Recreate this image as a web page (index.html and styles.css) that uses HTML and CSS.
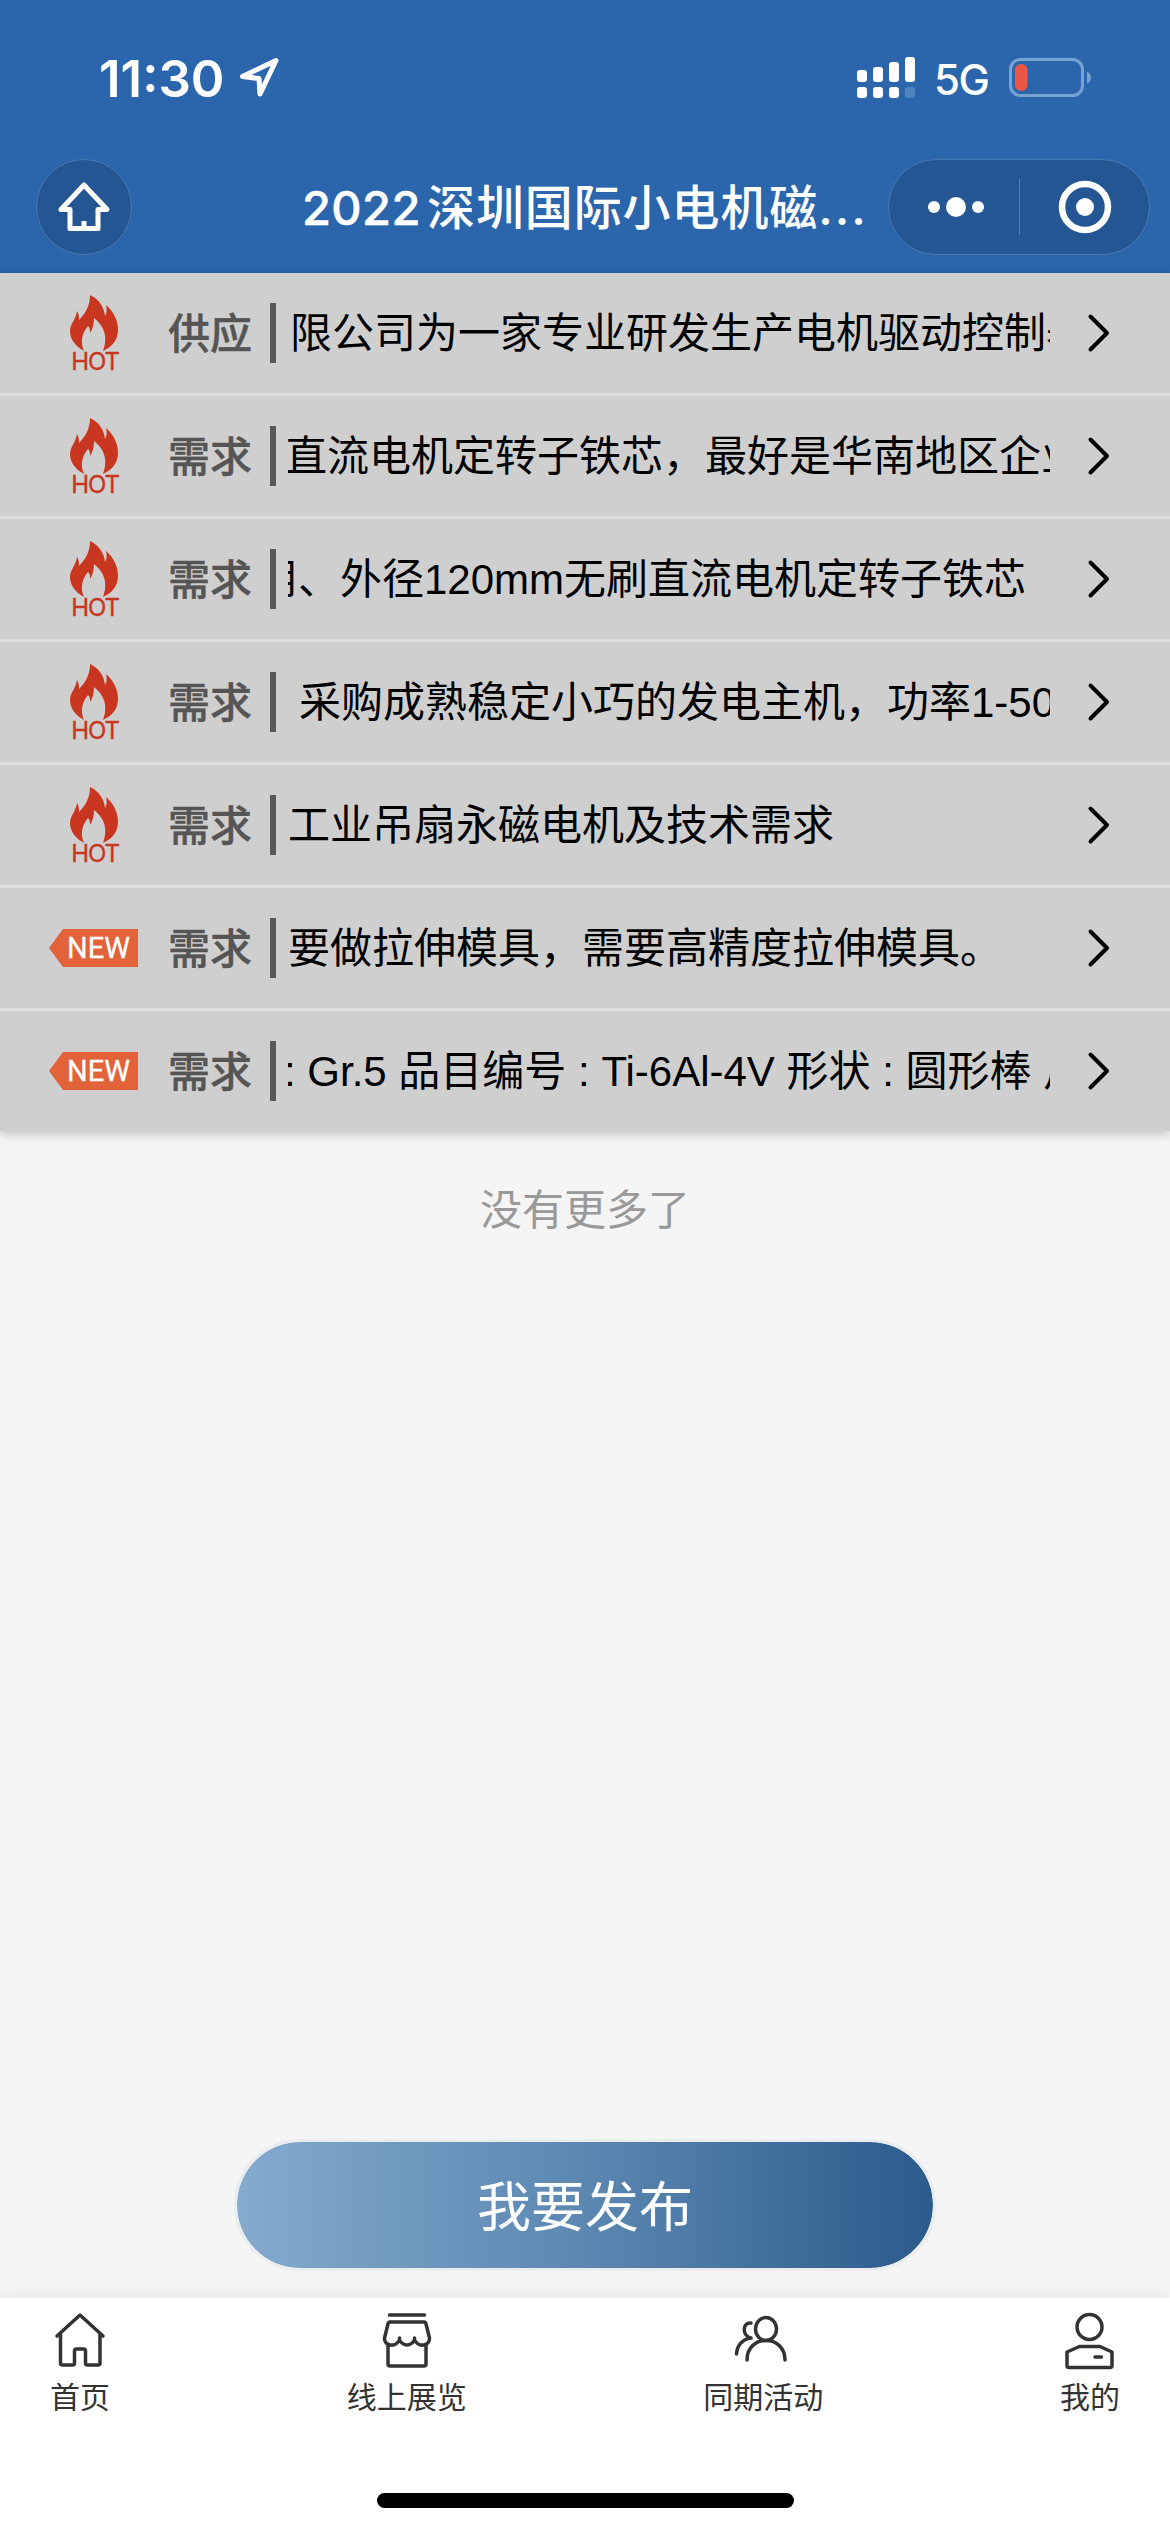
FILE: index.html
```html
<!DOCTYPE html>
<html lang="zh-CN">
<head>
<meta charset="utf-8">
<title>2022深圳国际小电机磁...</title>
<link rel="stylesheet" href="styles.css">
</head>
<body>
<svg class="defs" width="0" height="0">
  <symbol id="flame" viewBox="0 0 48 56">
    <path d="M20 0C29 4 34 12 35 21C37 18 37 14 36 10C44 17 48 26 48 35C48 45 42 52 33 56C37 46 37 33 24 23C24 28 23 34 20 38C20 35 20 33 18 31C12 38 10 47 14 56C5 51 0 44 0 36C0 29 6 24 7 16C9 19 9 22 9 25C16 18 20 10 20 0Z"/>
  </symbol>
  <symbol id="chevron" viewBox="0 0 24 40">
    <path d="M3.500 3.500L20 20L3.500 36.500"/>
  </symbol>
</svg>
<div class="screen">
  <header class="header">
    <div class="status">
      <span class="time">11:30</span>
      <svg class="locate" width="42" height="42" viewBox="0 0 42 42"><path d="M38 3.500L4.500 19.500L21 21.500L22 37Z"/></svg>
      <svg class="signal" width="58" height="42" viewBox="0 0 58 42">
        <rect x="0" y="13" width="10" height="12" rx="3"/><rect x="16" y="10" width="10" height="15" rx="3"/><rect x="32" y="5" width="10" height="20" rx="3"/><rect x="48" y="0" width="10" height="25" rx="3"/>
        <rect x="0" y="30" width="10" height="11" rx="3"/><rect x="16" y="30" width="10" height="11" rx="3"/><rect x="32" y="30" width="10" height="11" rx="3"/><rect class="weak" x="48" y="30" width="10" height="11" rx="3"/>
      </svg>
      <span class="network">5G</span>
      <svg class="battery" width="83" height="40" viewBox="0 0 83 40">
        <rect class="shell" x="1.500" y="1.500" width="72" height="36" rx="10"/>
        <path class="tip" d="M78 13.500Q82 15.500 82 19.500Q82 23.500 78 25.500Z"/>
        <rect class="charge" x="6" y="6" width="12.500" height="27" rx="6"/>
      </svg>
    </div>
    <div class="nav">
      <div class="round">
        <svg width="54" height="52" viewBox="0 0 54 52"><path d="M27 4L50 28.500H41V47.500H13V28.500H4Z"/><path class="door" d="M27 40V47"/></svg>
      </div>
      <h1 class="title"><span class="year">2022</span>深圳国际小电机磁<span class="dots">...</span></h1>
      <div class="capsule">
        <svg class="more" width="58" height="24" viewBox="0 0 58 24"><circle cx="7" cy="12" r="6"/><circle cx="29" cy="12" r="10"/><circle cx="51" cy="12" r="6"/></svg>
        <span class="divider"></span>
        <svg class="target" width="54" height="54" viewBox="0 0 54 54"><circle class="ring" cx="27" cy="27" r="23"/><circle class="core" cx="27" cy="27" r="9"/></svg>
      </div>
    </div>
  </header>

  <main class="content">
    <ul class="list">
      <li class="row"><div class="tag hot"><svg width="48" height="56"><use href="#flame"/></svg><span>HOT</span></div><b class="kind">供应</b><div class="ticker"><p style="margin-left:2px">限公司为一家专业研发生产电机驱动控制器</p></div><svg class="chevron" width="24" height="40"><use href="#chevron"/></svg></li>
      <li class="row"><div class="tag hot"><svg width="48" height="56"><use href="#flame"/></svg><span>HOT</span></div><b class="kind">需求</b><div class="ticker"><p style="margin-left:-3px">直流电机定转子铁芯，最好是华南地区企业</p></div><svg class="chevron" width="24" height="40"><use href="#chevron"/></svg></li>
      <li class="row"><div class="tag hot"><svg width="48" height="56"><use href="#flame"/></svg><span>HOT</span></div><b class="kind">需求</b><div class="ticker"><p style="margin-left:-32px">用、外径120mm无刷直流电机定转子铁芯</p></div><svg class="chevron" width="24" height="40"><use href="#chevron"/></svg></li>
      <li class="row"><div class="tag hot"><svg width="48" height="56"><use href="#flame"/></svg><span>HOT</span></div><b class="kind">需求</b><div class="ticker"><p style="margin-left:11px">采购成熟稳定小巧的发电主机，功率1-50</p></div><svg class="chevron" width="24" height="40"><use href="#chevron"/></svg></li>
      <li class="row"><div class="tag hot"><svg width="48" height="56"><use href="#flame"/></svg><span>HOT</span></div><b class="kind">需求</b><div class="ticker"><p>工业吊扇永磁电机及技术需求</p></div><svg class="chevron" width="24" height="40"><use href="#chevron"/></svg></li>
      <li class="row"><div class="tag new"><span>NEW</span></div><b class="kind">需求</b><div class="ticker"><p>要做拉伸模具，需要高精度拉伸模具。</p></div><svg class="chevron" width="24" height="40"><use href="#chevron"/></svg></li>
      <li class="row"><div class="tag new"><span>NEW</span></div><b class="kind">需求</b><div class="ticker"><p style="margin-left:-4px">: Gr.5 品目编号 : Ti-6Al-4V 形状 : 圆形棒 尺</p></div><svg class="chevron" width="24" height="40"><use href="#chevron"/></svg></li>
    </ul>
    <p class="end">没有更多了</p>
    <button class="publish">我要发布</button>
  </main>

  <footer class="footer">
    <nav class="tabs">
      <a class="tab"><svg width="60" height="60" viewBox="0 0 60 60"><path d="M7 26L30 5L53 26M10.500 23V53Q10.500 55 12.500 55H22.500Q24.500 55 24.500 53V41Q24.500 39 26.500 39H33.500Q35.500 39 35.500 41V53Q35.500 55 37.500 55H48Q50 55 50 53V23"/></svg><span>首页</span></a>
      <a class="tab"><svg width="60" height="60" viewBox="0 0 60 60"><path d="M12.500 5H47.500M13 12H47Q48.500 12 49 14L52.500 28C53 36 42 38 37.500 30V28V30C34 36.500 26 36.500 22.500 30V28V30C18 38 7 36 7.500 28L11 14Q11.500 12 13 12ZM11 35V54Q11 56 13 56H47Q49 56 49 54V35"/></svg><span>线上展览</span></a>
      <a class="tab"><svg width="60" height="60" viewBox="0 0 60 60"><ellipse cx="33" cy="19" rx="10.500" ry="11.500"/><path d="M14 50C14 24 52 24 52 50M18 13C9 12 9 26 18 28C9 29 4 36 3.500 44"/></svg><span>同期活动</span></a>
      <a class="tab"><svg width="60" height="60" viewBox="0 0 60 60"><ellipse cx="29.500" cy="17" rx="12.500" ry="12.500"/><path d="M19.500 36.500H40L52 42V55.500Q52 57.500 50 57.500H9Q7 57.500 7 55.500V42ZM35 47H41.500"/></svg><span>我的</span></a>
    </nav>
    <div class="indicator"></div>
  </footer>
</div>
</body>
</html>
```
FILE: styles.css
```css
* { box-sizing: border-box; }
body, ul, p, h1 { margin: 0; padding: 0; }
body {
  width: 1170px;
  background: #f5f5f5;
  font-family: "Liberation Sans", "Noto Sans CJK SC", sans-serif;
}
.defs { display: block; }
.screen { display: flex; flex-direction: column; height: 2532px; overflow: hidden; }

.header { height: 273px; background: #2b66ac; color: #fff; flex: none; }
.status { height: 159px; display: flex; align-items: center; padding: 0 78px 3px 99px; font-family: Inter, sans-serif; }
.time { font-size: 51px; font-weight: 600; width: 139px; letter-spacing: 0; white-space: nowrap; }
.locate { fill: none; stroke: #fff; stroke-width: 5; stroke-linejoin: round; }
.signal { margin-left: auto; fill: #fff; }
.signal .weak { fill: #4b84be; }
.network { font-size: 42px; font-weight: 500; width: 54px; margin: 2px 21px 0 19px; letter-spacing: -1.5px; white-space: nowrap; }
.shell { fill: none; stroke: #77a3d0; stroke-width: 3; }
.tip { fill: #77a3d0; }
.charge { fill: #ed5546; }

.nav { display: flex; align-items: center; height: 96px; padding: 0 20px 0 36px; }
.round { width: 96px; height: 96px; border-radius: 50%; background: #245694; border: 1px solid #4a7aae; display: flex; align-items: center; justify-content: center; flex: none; }
.round svg { fill: none; stroke: #fff; stroke-width: 5; stroke-linejoin: round; }
.title { width: 585px; margin-left: 170px; font-size: 48px; font-weight: 500; letter-spacing: .9px; white-space: nowrap; line-height: 90px; height: 96px; font-family: "Noto Sans CJK SC", sans-serif; }
.year { display: inline-block; width: 125px; font-family: Inter, sans-serif; font-weight: 500; font-size: 47px; letter-spacing: .4px; -webkit-text-stroke: .5px #fff; }
.dots { font-family: Inter, sans-serif; letter-spacing: 2px; }
.capsule { width: 262px; height: 96px; margin-left: auto; border: 1px solid #4a7aae; border-radius: 48px; background: #245694; display: flex; align-items: center; flex: none; padding: 0 37px 0 38px; }
.more { fill: #fff; }
.divider { width: 1px; height: 56px; background: #4f7fb3; margin-left: 34px; }
.target { margin-left: auto; }
.ring { fill: none; stroke: #fff; stroke-width: 6.500; }
.core { fill: #fff; }

.content { flex: 1; display: flex; flex-direction: column; align-items: center; }
.list { width: 1170px; list-style: none; display: flex; flex-direction: column; gap: 3px; background: #dedede; box-shadow: 0 3px 10px rgba(0, 0, 0, .22); }
.row { height: 120px; background: #cfcfcf; display: flex; align-items: center; padding-left: 49px; }
.tag { width: 89px; flex: none; }
.hot { color: #c9361f; display: flex; flex-direction: column; align-items: center; padding: 2px 0 0 1px; }
.hot svg { fill: #c9361f; display: block; }
.hot span { font: 24px/22px Inter, sans-serif; letter-spacing: -1.2px; margin-left: 2px; -webkit-text-stroke: .4px #c9361f; }
.new { height: 38px; background: #e2623a; clip-path: polygon(0 50%, 14px 0, 100% 0, 100% 100%, 14px 100%); color: #fff; font: 29px/38px Roboto, sans-serif; padding-left: 18px; -webkit-text-stroke: .3px #fff; }
.kind { width: 108px; margin: 0 12px 0 30px; height: 60px; line-height: 56px; font-weight: 500; font-family: "Noto Sans CJK SC", sans-serif; font-size: 42px; color: #555; border-right: 6px solid #595959; flex: none; -webkit-text-stroke: .4px #555; }
.ticker { width: 762px; overflow: hidden; white-space: nowrap; font-size: 42px; line-height: 60px; color: #000; padding-top: 2px; }
.chevron { margin-left: 37px; fill: none; stroke: #000; stroke-width: 4; stroke-linecap: round; stroke-linejoin: round; }
.end { margin-top: 50px; font-size: 42px; line-height: 60px; color: #999; }
.publish { margin-top: auto; margin-bottom: 27px; width: 702px; height: 132px; padding: 0 0 3px; border: 3px solid #ebecf0; border-radius: 66px; background: linear-gradient(90deg, #84aace, #5b87b1 50%, #2b5b8c) padding-box; color: #fff; font: 54px "Noto Sans CJK SC", sans-serif; }

.footer { height: 234px; background: #fff; flex: none; display: flex; flex-direction: column; align-items: center; box-shadow: 0 0 20px rgba(0, 0, 0, .07); }
.tabs { width: 100%; display: flex; justify-content: space-between; padding: 12px 50px 0; height: 195px; }
.tab { display: flex; flex-direction: column; align-items: center; color: #333; font-size: 30px; line-height: 44px; }
.tab svg { fill: none; stroke: #333; stroke-width: 3.500; stroke-linecap: round; stroke-linejoin: round; margin-bottom: 6px; }
.indicator { width: 417px; height: 15px; border-radius: 8px; background: #000; }
```
